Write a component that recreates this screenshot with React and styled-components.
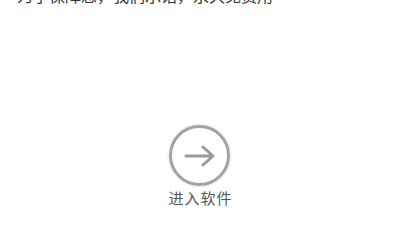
import React from "react";
import styled, { createGlobalStyle } from "styled-components";

const Global = createGlobalStyle`
  html, body { margin: 0; padding: 0; background: #fff; }
  body { font-family: "Noto Sans CJK SC", "Noto Sans", sans-serif; overflow: hidden; }
`;

const Page = styled.div`
  width: 400px;
  height: 225px;
  display: flex;
  flex-direction: column;
  align-items: center;
  overflow: hidden;
`;

const Intro = styled.p`
  align-self: flex-start;
  margin: -15px 0 0 17px;
  font-size: 16px;
  line-height: 20px;
  color: #333;
  white-space: nowrap;
`;

const Enter = styled.button`
  margin-top: 120px;
  display: flex;
  flex-direction: column;
  align-items: center;
  gap: 1px;
  background: none;
  border: none;
  padding: 0;
  cursor: pointer;
  font-family: inherit;
`;

const Circle = styled.span`
  width: 55px;
  height: 55px;
  border: 3px solid #a2a2a2;
  border-radius: 50%;
  display: flex;
  align-items: center;
  justify-content: center;
  box-shadow: 0 0 3px rgba(0, 0, 0, 0.18);
`;

const Label = styled.span`
  font-size: 15px;
  line-height: 21px;
  letter-spacing: 1px;
  margin-left: 1px;
  color: #555;
`;

export default function App() {
  return (
    <>
      <Global />
      <Page>
        <Intro>为了保障您，我们承诺，永久免费用</Intro>
        <Enter>
          <Circle>
            <svg width="32" height="24" viewBox="0 0 32 24" fill="none">
              <path d="M2 12H29M19 3L29 12L19 21" stroke="#9a9a9a" strokeWidth="3" strokeLinecap="round" strokeLinejoin="round" />
            </svg>
          </Circle>
          <Label>进入软件</Label>
        </Enter>
      </Page>
    </>
  );
}
